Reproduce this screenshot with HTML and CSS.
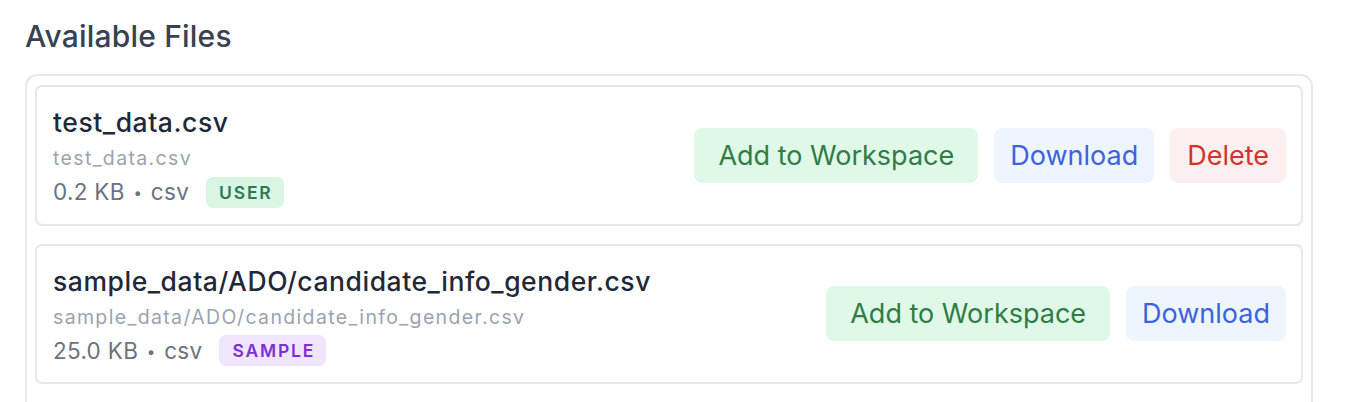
FILE: index.html
```html
<!DOCTYPE html>
<html>
<head>
<meta charset="utf-8">
<link rel="stylesheet" href="styles.css">
</head>
<body>
<div class="page">
  <h2 class="heading">Available Files</h2>
  <div class="list">
    <div class="card">
      <div class="info">
        <div class="title">test_data.csv</div>
        <div class="path">test_data.csv</div>
        <div class="meta"><span class="meta-text">0.2 KB <span class="dot">•</span> csv</span><span class="badge badge-user">USER</span></div>
      </div>
      <div class="actions">
        <button class="btn btn-add">Add to Workspace</button>
        <button class="btn btn-download">Download</button>
        <button class="btn btn-delete">Delete</button>
      </div>
    </div>
    <div class="card">
      <div class="info">
        <div class="title">sample_data/ADO/candidate_info_gender.csv</div>
        <div class="path">sample_data/ADO/candidate_info_gender.csv</div>
        <div class="meta"><span class="meta-text">25.0 KB <span class="dot">•</span> csv</span><span class="badge badge-sample">SAMPLE</span></div>
      </div>
      <div class="actions">
        <button class="btn btn-add">Add to Workspace</button>
        <button class="btn btn-download">Download</button>
      </div>
    </div>
  </div>
</div>
</body>
</html>
```

FILE: styles.css
```css
* { box-sizing: border-box; }
html, body { margin: 0; padding: 0; background: #ffffff; }
body { font-family: Inter, "Noto Sans", sans-serif; color: #1f2937; }
.page { padding: 14px 35px 0 25px; }
.heading {
  margin: 0 0 16px 0;
  font-size: 30px;
  font-weight: 500;
  line-height: 44px;
  letter-spacing: 0.2px;
  color: #374151;
}
.list {
  border: 2px solid #e5e7eb;
  border-radius: 12px;
  padding: 9px 8px 40px 8px;
  display: flex;
  flex-direction: column;
  gap: 18px;
}
.card {
  border: 2px solid #e5e7eb;
  border-radius: 7px;
  padding: 16px 15px 16px 16px;
  display: flex;
  align-items: center;
  justify-content: space-between;
}
.info { display: flex; flex-direction: column; }
.title {
  font-size: 26.5px;
  line-height: 39px;
  letter-spacing: 0.55px;
  color: #1f2937;
  font-weight: 500;
}
.path {
  font-size: 19.5px;
  line-height: 32px;
  letter-spacing: 1.35px;
  color: #9ca3af;
}
.meta {
  display: flex;
  align-items: center;
  gap: 17px;
  height: 31px;
  margin-top: 2.5px;
  color: #6b7280;
}
.meta-text {
  font-size: 22.5px;
  line-height: 31px;
  letter-spacing: 0.3px;
}
.dot {
  font-size: 15px;
  vertical-align: 2px;
  padding: 0 2px;
}
.badge {
  font-size: 17.5px;
  font-weight: 600;
  letter-spacing: 1.8px;
  line-height: 31px;
  height: 31px;
  padding: 0 11px 0 13px;
  border-radius: 7px;
}
.badge-user { background: #d9f6e5; color: #2f7a54; }
.badge-sample { background: #efe6fd; color: #7e2fd4; }
.actions { display: flex; gap: 16px; }
.btn {
  font-family: Inter, "Noto Sans", sans-serif;
  font-size: 27px;
  line-height: 55px;
  height: 55px;
  padding: 0 17px;
  border: none;
  border-radius: 8px;
  cursor: pointer;
}
.btn-add { background: #e0f8e7; color: #2f7d45; padding: 0 24px; }
.btn-download { background: #eef5ff; color: #3b63e0; padding: 0 16px; }
.btn-delete { background: #fcefef; color: #d0342c; }
```
